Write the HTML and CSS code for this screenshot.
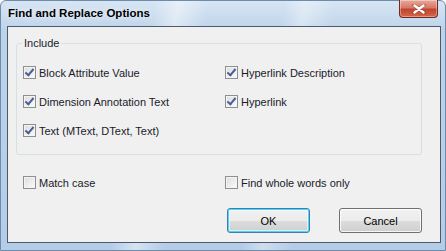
FILE: index.html
```html
<!DOCTYPE html>
<html lang="en">
 <head>
  <meta charset="utf-8"/>
  <title>Find and Replace Options</title>
  <link rel="stylesheet" href="styles.css">
 </head>
 <body>
  <div class="window">
   <div class="titlebar">
    <span class="title">Find and Replace Options</span>
    <button class="close" aria-label="Close">
     <svg width="14" height="10" viewBox="0 0 14 10">
      <path d="M2 1 L12 9 M12 1 L2 9" stroke="#7a2418" stroke-width="3.4" stroke-linecap="round" opacity="0.5"/>
      <path d="M2.5 1.5 L11.5 8.5 M11.5 1.5 L2.5 8.5" stroke="#fff" stroke-width="2.4" stroke-linecap="round"/>
     </svg>
    </button>
   </div>
   <div class="client">
    <fieldset class="group">
     <legend>Include</legend>
     <div class="grid">
      <label class="check"><span class="box on"></span>Block Attribute Value</label>
      <label class="check"><span class="box on"></span>Hyperlink Description</label>
      <label class="check"><span class="box on"></span>Dimension Annotation Text</label>
      <label class="check"><span class="box on"></span>Hyperlink</label>
      <label class="check"><span class="box on"></span>Text (MText, DText, Text)</label>
     </div>
    </fieldset>
    <div class="grid options">
     <label class="check"><span class="box"></span>Match case</label>
     <label class="check"><span class="box"></span>Find whole words only</label>
    </div>
    <div class="buttons">
     <button class="btn default">OK</button>
     <button class="btn">Cancel</button>
    </div>
   </div>
  </div>
 </body>
</html>
```
FILE: styles.css
```css
* {
  box-sizing: border-box;
}

body {
  margin: 0;
  background: #fff;
  font-family: "Liberation Sans", Arial, sans-serif;
  font-size: 11px;
  color: #1a1a2a;
}

.window {
  width: 446px;
  height: 251px;
  padding: 0 4px 7px 6px;
  display: flex;
  flex-direction: column;
  border: 1px solid #6d8bab;
  border-radius: 6px 6px 0 0;
  background:
    linear-gradient(100deg, transparent 150px, rgba(255,255,255,0.45) 175px, transparent 205px, transparent 280px, rgba(255,255,255,0.35) 300px, transparent 330px),
    linear-gradient(to bottom, #d7e5f3 0, #bdd3ea 30px, #b4cce6 100%);
}

.titlebar {
  height: 25px;
  display: flex;
  align-items: flex-start;
  justify-content: space-between;
}

.title {
  font-weight: bold;
  font-size: 11.5px;
  color: #000;
  padding-top: 6px;
  padding-left: 1px;
  text-shadow: 0 0 6px rgba(255,255,255,0.9);
}

.close {
  width: 39px;
  height: 18px;
  margin-top: -1px;
  margin-right: 3px;
  padding: 0;
  border: 1px solid #6e2a22;
  border-top: none;
  border-radius: 0 0 4px 4px;
  background: linear-gradient(to bottom, #e9aa9c 0, #d7786a 45%, #c2432e 55%, #d2674a 100%);
  box-shadow: inset 0 0 0 1px rgba(255,255,255,0.35);
  display: flex;
  align-items: center;
  justify-content: center;
}

.client {
  flex: 1;
  background: #f0f0f0;
  border: 1px solid #4b5b6d;
  padding: 10px 18px 9px 8px;
  display: flex;
  flex-direction: column;
}

.group {
  margin: 0;
  border: 1px solid #d5dfe5;
  border-radius: 3px;
  padding: 9px 6px 3px 6px;
  height: 118px;
}

.group legend {
  padding: 0 2px;
  margin-left: -1px;
  color: #1a1a2a;
}

.grid {
  display: grid;
  grid-template-columns: 202px 1fr;
  grid-auto-rows: 29px;
}

.options {
  margin-top: 13px;
  padding-left: 7px;
}

.check {
  display: flex;
  align-items: center;
  gap: 3px;
  white-space: nowrap;
}

.box {
  width: 13px;
  height: 13px;
  border: 1px solid #8e8f8f;
  background: linear-gradient(135deg, #dcdcdc, #fbfbfb);
  box-shadow: inset 0 0 0 1px #f4f4f4;
  position: relative;
  flex: none;
}

.box.on::after {
  content: "";
  position: absolute;
  left: 3px;
  top: 0px;
  width: 3px;
  height: 7px;
  border: solid #4a5f97;
  border-width: 0 2px 2px 0;
  transform: rotate(40deg);
}

.buttons {
  margin-top: auto;
  display: flex;
  justify-content: flex-end;
  gap: 29px;
}

.btn {
  width: 83px;
  height: 25px;
  font-family: inherit;
  font-size: 11px;
  color: #000;
  border: 1px solid #707070;
  border-radius: 3px;
  background: linear-gradient(to bottom, #f2f2f2 0, #ebebeb 50%, #dddddd 51%, #cfcfcf 100%);
  box-shadow: inset 0 0 0 1px rgba(255,255,255,0.8);
}

.btn.default {
  border-color: #3c7fb1;
  box-shadow: inset 0 0 0 1px #48d8fb, inset 0 0 0 2px rgba(255,255,255,0.5);
}
```
